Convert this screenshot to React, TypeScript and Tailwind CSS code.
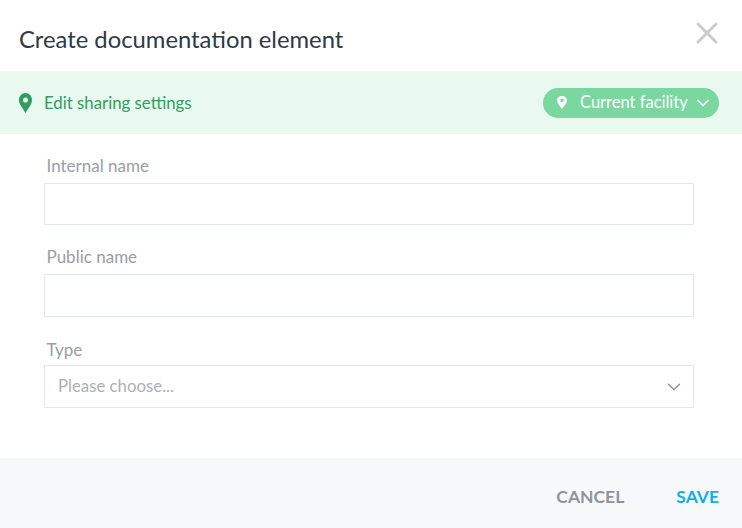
import { ChevronDown, X } from "lucide-react";

const Pin = ({ className }: { className: string }) => (
  <svg viewBox="0 0 14 20" className={className} fill="currentColor" preserveAspectRatio="none">
    <path
      fillRule="evenodd"
      d="M7 0C3.1 0 0 3.100 0 7c0 2.400 1 4.200 2.300 6.200C3.800 15.500 5.500 17.600 7 20c1.500-2.400 3.200-4.500 4.700-6.800C13 11.200 14 9.400 14 7c0-3.900-3.100-7-7-7Zm0 9.600A2.600 2.600 0 1 1 7 4.400a2.600 2.600 0 0 1 0 5.200Z"
    />
  </svg>
);

const Label = ({ text, className }: { text: string; className: string }) => (
  <label className={`block pl-[2.500px] text-[17px] leading-[22px] text-[#9a9ea3] ${className}`}>{text}</label>
);

export default function App() {
  return (
    <div className="flex h-[528px] w-[742px] flex-col overflow-hidden bg-white font-['Lato','Open_Sans',sans-serif]">
      <div className="flex h-[71px] items-center justify-between pl-[19px] pr-[17px]">
        <h1 className="pt-[8px] text-[23.800px] text-[#2f3a46]">Create documentation element</h1>
        <X className="mb-[5px] h-[36px] w-[36px] text-[#cccccc]" strokeWidth={2} />
      </div>

      <div className="flex h-[63px] items-center justify-between bg-[#e9f9f0] pl-[19px] pr-[23px]">
        <div className="flex items-center gap-3">
          <Pin className="h-[20px] w-[13px] text-[#2f9e5f]" />
          <span className="text-[16.800px] text-[#2f9e5f]">Edit sharing settings</span>
        </div>
        <div className="flex h-[30px] w-[176px] items-center rounded-full bg-[#79d79f] pl-[14px] text-white">
          <Pin className="h-[13px] w-[10px]" />
          <span className="ml-[13px] text-[16.500px]">Current facility</span>
          <ChevronDown className="ml-[5px] h-[20px] w-[20px]" strokeWidth={2} />
        </div>
      </div>

      <div className="flex flex-1 flex-col px-[44px] pt-[21px]">
        <Label text="Internal name" className="" />
        <input className="mt-[6px] h-[42px] w-[650px] border border-[#e3e8e8] bg-white" />
        <Label text="Public name" className="mt-[21px]" />
        <input className="mt-[6px] h-[43px] w-[650px] border border-[#e3e8e8] bg-white" />
        <Label text="Type" className="mt-[22px]" />
        <div className="mt-[4px] flex h-[43px] w-[650px] items-center justify-between border border-[#e6e8e8] pl-[13px] pr-[8px]">
          <span className="pb-[1px] text-[16.800px] text-[#adb0b3]">Please choose...</span>
          <ChevronDown className="h-[22px] w-[22px] text-[#8f9398]" strokeWidth={1.5} />
        </div>
      </div>

      <div className="flex h-[70px] items-center justify-end gap-[52px] bg-[#f7f8fa] pr-[23px] pt-[8px]">
        <button className="text-[17.500px] font-bold text-[#8f9499]">CANCEL</button>
        <button className="text-[17.500px] font-bold text-[#0fb0e6]">SAVE</button>
      </div>
    </div>
  );
}
